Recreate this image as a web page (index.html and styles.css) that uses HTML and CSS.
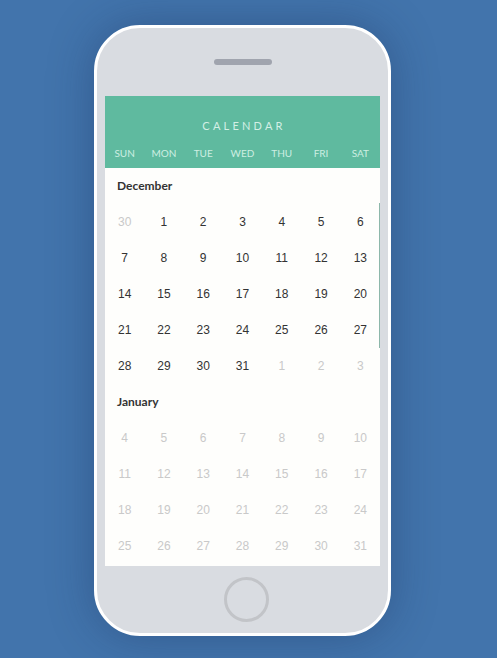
FILE: index.html
```html
<!DOCTYPE html>
<html>
<head>
<meta charset="utf-8">
<link rel="stylesheet" href="styles.css">
</head>
<body>
<div class="phone">
  <div class="speaker"></div>
  <div class="screen">
    <div class="header">
      <div class="title">CALENDAR</div>
      <div class="days">
        <span>SUN</span><span>MON</span><span>TUE</span><span>WED</span><span>THU</span><span>FRI</span><span>SAT</span>
      </div>
    </div>
    <div class="body">
      <div class="month">December</div>
      <div class="grid">
        <span class="off">30</span><span>1</span><span>2</span><span>3</span><span>4</span><span>5</span><span>6</span>
        <span>7</span><span>8</span><span>9</span><span>10</span><span>11</span><span>12</span><span>13</span>
        <span>14</span><span>15</span><span>16</span><span>17</span><span>18</span><span>19</span><span>20</span>
        <span>21</span><span>22</span><span>23</span><span>24</span><span>25</span><span>26</span><span>27</span>
        <span>28</span><span>29</span><span>30</span><span>31</span><span class="off">1</span><span class="off">2</span><span class="off">3</span>
      </div>
      <div class="month">January</div>
      <div class="grid faded">
        <span>4</span><span>5</span><span>6</span><span>7</span><span>8</span><span>9</span><span>10</span>
        <span>11</span><span>12</span><span>13</span><span>14</span><span>15</span><span>16</span><span>17</span>
        <span>18</span><span>19</span><span>20</span><span>21</span><span>22</span><span>23</span><span>24</span>
        <span>25</span><span>26</span><span>27</span><span>28</span><span>29</span><span>30</span><span>31</span>
      </div>
    </div>
    <div class="scrollbar"></div>
  </div>
  <div class="home"></div>
</div>
</body>
</html>
```

FILE: styles.css
```css
html, body {
  margin: 0;
  padding: 0;
}
body {
  background: #4274ac;
  width: 497px;
  height: 658px;
  overflow: hidden;
  padding: 25px 0 0 94px;
  box-sizing: border-box;
  font-family: "Liberation Sans", Arial, sans-serif;
}
.phone {
  box-sizing: border-box;
  width: 297px;
  height: 611px;
  border: 3px solid #ffffff;
  border-radius: 46px;
  background: #d9dce1;
  box-shadow: 0 0 45px rgba(20, 40, 80, 0.35);
  display: flex;
  flex-direction: column;
  align-items: center;
}
.speaker {
  width: 58px;
  height: 6px;
  border-radius: 3px;
  background: #a0a4ae;
  margin-top: 31px;
}
.screen {
  position: relative;
  margin-top: 31px;
  width: 275px;
  height: 470px;
  background: #fefefc;
  overflow: hidden;
}
.header {
  background: #5fba9f;
  height: 72px;
  box-sizing: border-box;
  padding-top: 23px;
  font-family: Lato, "Open Sans", sans-serif;
  font-weight: 400;
  color: #d3efe5;
}
.title {
  text-align: center;
  font-size: 11px;
  letter-spacing: 3.2px;
  line-height: 14px;
  padding-left: 3px;
}
.days {
  display: grid;
  grid-template-columns: repeat(7, 1fr);
  margin-top: 14px;
  font-size: 10px;
  line-height: 12px;
  text-align: center;
  color: #cdeee2;
}
.month {
  height: 36px;
  line-height: 36px;
  padding-left: 12px;
  font-family: Lato, "Open Sans", sans-serif;
  font-weight: 700;
  font-size: 12px;
  color: #333333;
}
.grid {
  display: grid;
  grid-template-columns: repeat(7, 1fr);
  grid-auto-rows: 36px;
  font-size: 12px;
  color: #333333;
}
.grid span {
  display: flex;
  align-items: center;
  justify-content: center;
}
.grid .off,
.grid.faded span {
  color: #c9c9c9;
}
.scrollbar {
  position: absolute;
  right: 0;
  top: 107px;
  width: 1px;
  height: 145px;
  background: #8db7aa;
}
.home {
  margin-top: 11px;
  margin-left: 8px;
  box-sizing: border-box;
  width: 45px;
  height: 45px;
  border: 3px solid #c2c4c8;
  border-radius: 50%;
}
```
